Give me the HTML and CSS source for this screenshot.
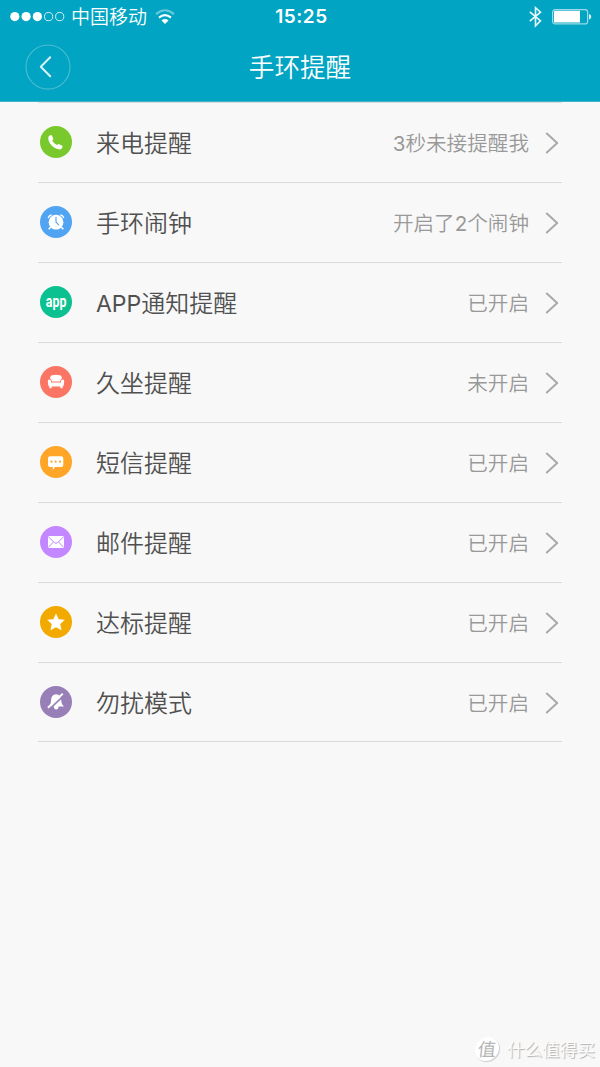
FILE: index.html
```html
<!DOCTYPE html>
<html lang="zh-CN">
<head>
<meta charset="utf-8">
<title>手环提醒</title>
<link rel="stylesheet" href="styles.css">
</head>
<body>
<header class="header">
  <div class="status">
    <div class="status-left">
      <svg class="signal" width="56" height="12" viewBox="0 0 56 12"><g fill="#fff"><circle cx="5.8" cy="5.6" r="4.6"/><circle cx="17.1" cy="5.6" r="4.6"/><circle cx="28.4" cy="5.6" r="4.6"/></g><g fill="none" stroke="#d9f1f6" stroke-width="1"><circle cx="39.6" cy="5.6" r="4.1"/><circle cx="50.7" cy="5.6" r="4.1"/></g></svg>
      <span class="carrier">中国移动</span>
      <svg class="wifi" width="20" height="16" viewBox="0 0 20 16"><g fill="none" stroke="#fff" stroke-width="2.1"><path d="M1 5.1Q10-2.6 19 5.1" opacity=".4"/><path d="M4 8.6Q10 3.8 16 8.6"/></g><path d="M6.5 11.4Q10 8.8 13.5 11.4L10 15Z" fill="#fff"/></svg>
    </div>
    <span class="time">15:25</span>
    <div class="status-right">
      <svg width="14" height="22" viewBox="0 0 14 22" fill="none" stroke="#e9f8fb" stroke-width="1.6"><path d="M1.8 5.8 12.5 14.8 7.5 19.8V1.7L12.5 6.2 1.8 15.2"/></svg>
      <svg class="battery" width="40" height="16" viewBox="0 0 40 16"><rect x=".6" y=".6" width="35" height="14.3" rx="2.5" fill="none" stroke="#9bdbe7" stroke-width="1.2"/><path d="M2 2.5Q2 1.8 2.7 1.8H28V13.6H2.7Q2 13.6 2 13Z" fill="#fff"/><path d="M37 5Q39.3 5.6 39.3 7.7T37 10.5Z" fill="#d9f1f6"/></svg>
    </div>
  </div>
  <div class="nav">
    <svg class="back" width="46" height="46" viewBox="0 0 46 46" fill="none"><circle cx="23" cy="23" r="22" stroke="#4dbdd1" stroke-width="1.1"/><path d="M25.2 13.2 15.8 22.7 25.2 32.2" stroke="#d9f2f6" stroke-width="2" stroke-linecap="round" stroke-linejoin="round"/></svg>
    <h1 class="title">手环提醒</h1>
  </div>
</header>
<main class="list">
  <div class="row">
    <svg class="icon" viewBox="0 0 32 32"><circle cx="16" cy="16" r="16" fill="#7ac92c"/><path d="M9 10.1 10.4 9.2Q11.4 8.7 12 9.8L13.2 12.2Q13.6 13.1 12.9 13.8L12.2 14.6Q13.5 17.3 16.8 19.1L17.8 18.4Q18.5 17.9 19.3 18.3L21.8 19.4Q23 20 22.5 21L21.7 22.4Q20.8 23.7 18.8 23.3C13.4 22.3 8.8 17.5 8.3 13Q8 11 9 10.1Z" fill="#fff"/></svg>
    <span class="label">来电提醒</span><span class="value"><span class="digit">3</span>秒未接提醒我</span>
    <svg class="chevron" viewBox="0 0 14 22"><path d="M1.8 1.5 12.2 11 1.8 20.5"/></svg>
  </div>
  <div class="row">
    <svg class="icon" viewBox="0 0 32 32"><circle cx="16" cy="16" r="16" fill="#51a4f1"/><g stroke="#fff" fill="none"><path d="M8.2 12.1Q8.8 9.4 11.7 8.8M20.3 8.8Q23.2 9.4 23.8 12.1" stroke-width="1.3"/><path d="M10.6 21.2 8.7 23.3M21.4 21.2 23.3 23.3" stroke-width="1.7"/></g><circle cx="16" cy="16.2" r="7.4" fill="#fff"/><path d="M16 10.8V16L18.9 19.1" fill="none" stroke="#51a4f1" stroke-width="1.1"/></svg>
    <span class="label">手环闹钟</span><span class="value">开启了<span class="digit">2</span>个闹钟</span>
    <svg class="chevron" viewBox="0 0 14 22"><path d="M1.8 1.5 12.2 11 1.8 20.5"/></svg>
  </div>
  <div class="row">
    <div class="icon app-icon"><span class="app-text">app</span></div>
    <span class="label"><span class="latin">APP</span>通知提醒</span><span class="value">已开启</span>
    <svg class="chevron" viewBox="0 0 14 22"><path d="M1.8 1.5 12.2 11 1.8 20.5"/></svg>
  </div>
  <div class="row">
    <svg class="icon" viewBox="0 0 32 32"><circle cx="16" cy="16" r="16" fill="#fb7564"/><g fill="#fff"><path d="M10.2 12.7V11.4Q10.2 9.2 12.4 9.2Q16 8.5 19.6 9.2Q21.8 9.2 21.8 11.4V12.7Q20.3 13.2 20 15.5H12Q11.7 13.2 10.2 12.7Z"/><path d="M9.2 13.6Q11.1 13.6 11.2 16.5H20.8Q20.9 13.6 22.8 13.6Q24.4 13.8 24.2 15.5L23.6 19.6Q23.5 20.5 22.6 20.5V22.3H20.4V20.5H11.6V22.3H9.4V20.5Q8.5 20.5 8.4 19.6L7.8 15.5Q7.6 13.8 9.2 13.6Z"/></g></svg>
    <span class="label">久坐提醒</span><span class="value">未开启</span>
    <svg class="chevron" viewBox="0 0 14 22"><path d="M1.8 1.5 12.2 11 1.8 20.5"/></svg>
  </div>
  <div class="row">
    <svg class="icon" viewBox="0 0 32 32"><circle cx="16" cy="16" r="16" fill="#ffa629"/><path d="M10 10.2H21.3Q23.3 10.2 23.3 12.2V19Q23.3 21 21.3 21H15L12.8 23.9V21H10Q8 21 8 19V12.2Q8 10.2 10 10.2Z" fill="#fff"/><g fill="#ffa629"><circle cx="11.4" cy="15.7" r="1.1"/><circle cx="15.7" cy="15.7" r="1.1"/><circle cx="20" cy="15.7" r="1.1"/></g></svg>
    <span class="label">短信提醒</span><span class="value">已开启</span>
    <svg class="chevron" viewBox="0 0 14 22"><path d="M1.8 1.5 12.2 11 1.8 20.5"/></svg>
  </div>
  <div class="row">
    <svg class="icon" viewBox="0 0 32 32"><circle cx="16" cy="16" r="16" fill="#c388ff"/><rect x="8" y="10" width="16" height="12" rx="1" fill="#fff"/><path d="M8.2 10.7 14.6 16.7Q16 17.9 17.4 16.7L23.8 10.7M8.5 21.4 13.3 16M23.5 21.4 18.7 16" fill="none" stroke="#c388ff" stroke-width="1"/></svg>
    <span class="label">邮件提醒</span><span class="value">已开启</span>
    <svg class="chevron" viewBox="0 0 14 22"><path d="M1.8 1.5 12.2 11 1.8 20.5"/></svg>
  </div>
  <div class="row">
    <svg class="icon" viewBox="0 0 32 32"><circle cx="16" cy="16" r="16" fill="#f2aa00"/><path d="M16 8 18.5 13.4 24.3 14 20 18 21.2 23.8 16 20.9 10.8 23.8 12 18 7.7 14 13.5 13.4Z" fill="#fff" stroke="#fff" stroke-width=".5" stroke-linejoin="round"/></svg>
    <span class="label">达标提醒</span><span class="value">已开启</span>
    <svg class="chevron" viewBox="0 0 14 22"><path d="M1.8 1.5 12.2 11 1.8 20.5"/></svg>
  </div>
  <div class="row">
    <svg class="icon" viewBox="0 0 32 32"><circle cx="16" cy="16" r="16" fill="#987fb7"/><path d="M9 20.6Q11 18.6 11 15Q11 8.3 16.2 8.2Q21.3 8.3 21.3 15Q21.3 18.6 24 20.6H18.5Q18.4 23.6 16.2 23.6Q14 23.6 13.8 20.6Z" fill="#fff"/><path d="M8 21.7 22.8 7.8" stroke="#fff" stroke-width="2"/><path d="M9.8 22.9 24.8 8.6" stroke="#987fb7" stroke-width="1.6"/></svg>
    <span class="label">勿扰模式</span><span class="value">已开启</span>
    <svg class="chevron" viewBox="0 0 14 22"><path d="M1.8 1.5 12.2 11 1.8 20.5"/></svg>
  </div>
</main>
<footer class="brand"><span class="seal">值</span><span class="brand-name">什么值得买</span></footer>
</body>
</html>
```
FILE: styles.css
```css
* { box-sizing: border-box; }
body {
  margin: 0;
  height: 1067px;
  display: flex;
  flex-direction: column;
  overflow: hidden;
  background: #f8f8f8;
  font-family: "Noto Sans CJK SC", sans-serif;
  font-weight: 350;
}
svg { display: block; flex: none; }
.header { height: 102px; background: #01a5c3; color: #fff; border-bottom: 1px solid #3fb5cc; }
.status { height: 33px; display: grid; grid-template-columns: 1fr auto 1fr; align-items: center; padding: 0 8px 0 9px; }
.status-left { display: flex; align-items: center; }
.carrier { font-size: 19px; line-height: 32px; padding-bottom: 1px; margin-left: 6px; }
.wifi { margin-left: 8px; }
.time { font-family: Inter, sans-serif; font-size: 19px; font-weight: 600; letter-spacing: 0.5px; padding-left: 2px; }
.status-right { display: flex; align-items: center; justify-content: flex-end; gap: 10px; }
.nav { height: 68px; display: grid; grid-template-columns: 46px 1fr 46px; align-items: center; padding: 0 25px; }
.title { margin: 0; padding-bottom: 2px; font-size: 25.6px; font-weight: 350; line-height: 34px; text-align: center; }
.list { margin: 0 38px; border-top: 1px solid #dcdcdc; }
.row { height: 80px; display: flex; align-items: center; padding: 0 3px 1px 2px; border-bottom: 1px solid #d9d9d9; }
.row:last-child { height: 79px; padding-bottom: 0; }
.icon { width: 32px; height: 32px; }
.app-icon { display: flex; justify-content: center; align-items: center; border-radius: 50%; background: #0bc190; }
.app-text { font-family: Roboto, sans-serif; font-size: 17px; line-height: 24px; font-weight: 700; color: #fff; transform: scaleX(0.73); padding-bottom: 2px; }
.label { margin-left: 24px; padding-bottom: 1px; font-size: 24px; line-height: 36px; color: #505050; }
.latin { font-family: Inter, sans-serif; font-weight: 400; font-size: 23px; line-height: 1; }
.value { margin-left: auto; padding-bottom: 1px; font-size: 20.6px; line-height: 30px; color: #999; }
.digit { font-family: Inter, sans-serif; font-weight: 400; line-height: 1; }
.chevron { width: 14px; height: 22px; margin: 1px 0 0 16px; fill: none; stroke: #a9a9a9; stroke-width: 2; stroke-linecap: round; stroke-linejoin: round; }
.brand { margin-top: auto; height: 36px; padding-right: 5px; display: flex; align-items: center; justify-content: flex-end; gap: 8px; color: #fff; }
.seal { width: 24px; height: 24px; border-radius: 50%; background: #fff; box-shadow: 1px 1px 1px #ccc; color: #b5b5b5; font-size: 18px; line-height: 23px; text-align: center; transform: skewX(-6deg); font-weight: 400; }
.brand-name { font-size: 17.6px; line-height: 30px; font-weight: 400; color: #fcfcfc; text-shadow: 1px 1px 1px #b0b0b0; }
```
